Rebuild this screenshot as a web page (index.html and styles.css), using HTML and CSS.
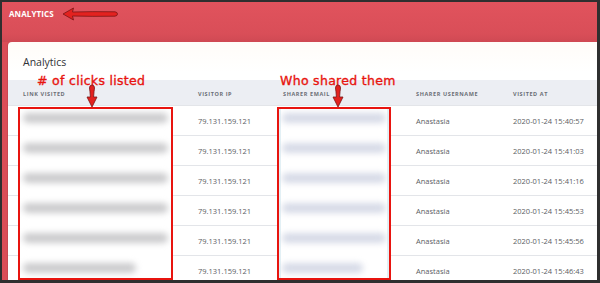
FILE: index.html
```html
<!DOCTYPE html>
<html lang="en">
<head>
  <meta charset="UTF-8" />
  <meta name="viewport" content="width=device-width, initial-scale=1" />
  <title>Analytics</title>
  <link rel="stylesheet" href="styles.css">
</head>
<body>
  <div class="frame">
    <!-- Top red bar with page title -->
    <header class="topbar">
      <span class="topbar-title">ANALYTICS</span>
      <svg class="left-arrow" width="56" height="14" viewBox="0 0 56 14">
        <path d="M1 7 L11.5 1 L10.5 5 Q30 4.4 53 4.8 Q55.5 5.2 55.5 7 Q55.5 8.8 53 9.2 Q30 9.6 10.5 9 L11.5 13 Z" fill="#e3221f" stroke="#7a1414" stroke-width="0.8"/>
      </svg>
    </header>

    <section class="card">
      <h2 class="card-title">Analytics</h2>
      <table class="visits">
        <thead>
          <tr>
            <th class="col-link">Link visited</th>
            <th class="col-ip">Visitor IP</th>
            <th class="col-email">Sharer email</th>
            <th class="col-user">Sharer username</th>
            <th class="col-at">Visited at</th>
          </tr>
        </thead>
        <tbody>
          <tr><td></td><td>79.131.159.121</td><td></td><td>Anastasia</td><td>2020-01-24 15:40:57</td></tr>
          <tr><td></td><td>79.131.159.121</td><td></td><td>Anastasia</td><td>2020-01-24 15:41:03</td></tr>
          <tr><td></td><td>79.131.159.121</td><td></td><td>Anastasia</td><td>2020-01-24 15:41:16</td></tr>
          <tr><td></td><td>79.131.159.121</td><td></td><td>Anastasia</td><td>2020-01-24 15:45:53</td></tr>
          <tr><td></td><td>79.131.159.121</td><td></td><td>Anastasia</td><td>2020-01-24 15:45:56</td></tr>
          <tr><td></td><td>79.131.159.121</td><td></td><td>Anastasia</td><td>2020-01-24 15:46:43</td></tr>
        </tbody>
      </table>
    </section>

    <!-- Annotations drawn over the screenshot -->
    <div class="note note-clicks">
      <span class="note-text"># of clicks listed</span>
    </div>
    <div class="note note-shared">
      <span class="note-text">Who shared them</span>
    </div>

    <svg class="down-arrow arrow-clicks" width="12" height="24" viewBox="0 0 12 24">
      <path d="M6 1 Q8.5 1 8.5 4 Q8 7 7.6 13 L11 13 L6 23 L1 13 L4.4 13 Q4 7 3.5 4 Q3.5 1 6 1 Z" fill="#e3221f" stroke="#7a1414" stroke-width="0.8"/>
    </svg>
    <svg class="down-arrow arrow-shared" width="12" height="24" viewBox="0 0 12 24">
      <path d="M6 1 Q8.5 1 8.5 4 Q8 7 7.6 13 L11 13 L6 23 L1 13 L4.4 13 Q4 7 3.5 4 Q3.5 1 6 1 Z" fill="#e3221f" stroke="#7a1414" stroke-width="0.8"/>
    </svg>

    <div class="blur-box box-clicks">
      <div class="blur-bar"></div>
      <div class="blur-bar"></div>
      <div class="blur-bar"></div>
      <div class="blur-bar"></div>
      <div class="blur-bar"></div>
      <div class="blur-bar short"></div>
    </div>
    <div class="blur-box box-shared">
      <div class="blur-bar"></div>
      <div class="blur-bar"></div>
      <div class="blur-bar"></div>
      <div class="blur-bar"></div>
      <div class="blur-bar"></div>
      <div class="blur-bar short"></div>
    </div>
  </div>
</body>
</html>
```

FILE: styles.css
```css
/* Global */
html, body {
  margin: 0;
  padding: 0;
  background: #2e2e2e;
  font-family: "Open Sans", "Liberation Sans", sans-serif;
}

.frame {
  position: relative;
  width: 600px;
  height: 283px;
  box-sizing: border-box;
  border: solid #2f2f2f;
  border-width: 2px 3px 3px 2px;
  background: #db4d57;
  overflow: hidden;
  display: flex;
  flex-direction: column;
}

/* Red title bar */
.topbar {
  height: 40px;
  flex: none;
  box-sizing: border-box;
  padding: 5px 0 0 7px;
  display: flex;
  align-items: flex-start;
  gap: 8px;
  background: linear-gradient(#e1535d, #d94e58 80%, #cf4953);
}

.topbar-title {
  color: #fff;
  font-size: 8px;
  font-weight: 700;
  line-height: 14px;
  letter-spacing: 0.1px;
}

/* White card */
.card {
  flex: 1;
  margin-left: 6px;
  background: linear-gradient(#fffcf8, #ffffff 30px);
  border-radius: 4px 0 0 0;
  box-shadow: -1px 0 0 #c94650;
}

.card-title {
  margin: 0;
  padding: 14px 0 12px 15px;
  font-size: 10.5px;
  line-height: 12px;
  font-weight: 400;
  color: #2f3236;
}

/* Table */
.visits {
  width: 100%;
  border-collapse: collapse;
  table-layout: fixed;
}

.visits th {
  height: 23px;
  padding: 2px 0 0;
  text-align: left;
  background: #eceef3;
  color: #6b6f76;
  font-size: 5.5px;
  font-weight: 700;
  letter-spacing: 0.6px;
  text-transform: uppercase;
}

.visits td {
  height: 29px;
  padding: 0;
  border-top: 1px solid #e3e5e9;
  color: #5b5e63;
  font-size: 7.5px;
}

.visits th:first-child,
.visits td:first-child {
  padding-left: 15px;
}

.col-link { width: 175px; }
.col-ip { width: 85px; }
.col-email { width: 133px; }
.col-user { width: 97px; }

/* Annotations */
.note {
  position: absolute;
  top: 66px;
}

.note-clicks { left: 35px; }
.note-shared { left: 278px; }

.note-text {
  color: #e8140f;
  font-family: "Comic Sans MS", "DejaVu Sans", sans-serif;
  font-size: 12.5px;
  line-height: 16px;
  letter-spacing: 0.3px;
  -webkit-text-stroke: 0.35px #e8140f;
}

.down-arrow {
  position: absolute;
  top: 82px;
}

.arrow-clicks { left: 84px; }
.arrow-shared { left: 330px; }

.blur-box {
  position: absolute;
  top: 105px;
  height: 173px;
  box-sizing: border-box;
  border: 2px solid #e8140f;
  background: #fff;
  overflow: hidden;
  padding: 4px 3px 0;
  display: flex;
  flex-direction: column;
  gap: 20px;
}

.box-clicks {
  left: 16px;
  width: 155px;
}

.box-shared {
  left: 275px;
  width: 114px;
  box-shadow: inset 2px 0 0 #e3f0f5, inset -2px 0 0 #e3f0f5;
}

.blur-bar {
  height: 10px;
  flex: none;
  border-radius: 5px;
  background: #cbcbcd;
  filter: blur(3px);
}

.blur-bar.short {
  width: 78%;
}

.box-shared .blur-bar {
  background: #d6dae7;
}
```
